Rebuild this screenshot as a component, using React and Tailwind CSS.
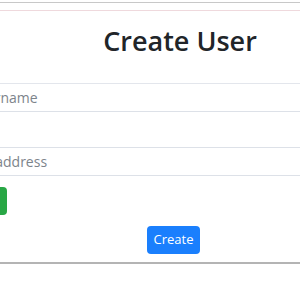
export default function App() {
    return (
        <div className="w-[300px] h-[300px] overflow-hidden bg-white font-['Open_Sans',sans-serif]">
            <div className="pt-[2px]">
                <div className="h-px bg-[#c8c8c8]"></div>
                <div className="mt-[7px] h-px bg-[#efd9dd]"></div>
            </div>

            <div className="-ml-[60px] w-[480px] border-b-2 border-[#b4b4b4] pb-[8px]">
                <h1 className="mt-[10px] text-center text-[27px] leading-[40px] font-semibold text-[#212529]">
                    Create User
                </h1>

                <form className="mt-[22px] border-t border-[#e3e6ec] pt-0">
                    <input
                        type="text"
                        placeholder="Username"
                        className="block ml-[18px] w-[470px] h-[28px] border-b border-[#dde1e8] px-[12px] text-[14px] text-[#495057] placeholder:text-[#7d848b] outline-none"
                    />
                    <div className="h-[35px]"></div>
                    <input
                        type="email"
                        placeholder="Email address"
                        className="block ml-[4px] w-[480px] h-[29px] border-y border-[#dde1e8] px-[12px] text-[14px] text-[#495057] placeholder:text-[#7d848b] outline-none"
                    />
                    <div className="mt-[11px] ml-[20px] h-[28px] w-[47px] rounded-[4px] bg-[#28a745]"></div>
                    <div className="mt-[11px] pl-[207px]">
                        <button
                            type="submit"
                            className="h-[28px] w-[53px] rounded-[4px] bg-[#1a7ffd] text-[13px] text-white"
                        >
                            Create
                        </button>
                    </div>
                </form>
            </div>
        </div>
    );
}
